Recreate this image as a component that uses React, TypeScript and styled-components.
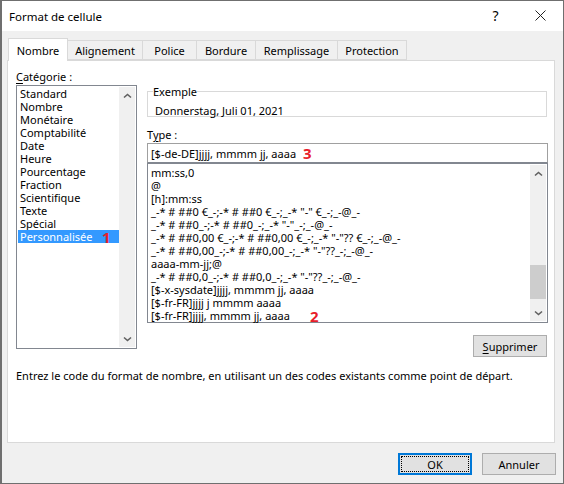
import React from 'react';
import styled, { createGlobalStyle } from 'styled-components';

const GlobalStyle = createGlobalStyle`
  html, body {
    margin: 0;
    padding: 0;
    background: #f0f0f0;
  }
  body {
    font-family: "Noto Sans", "Open Sans", sans-serif;
    font-size: 11px;
    color: #000;
  }
`;

const Dialog = styled.div`
  width: 564px;
  height: 484px;
  box-sizing: border-box;
  border: 1px solid #6f6f6f;
  border-left-width: 2px;
  background: #f0f0f0;
  display: flex;
  flex-direction: column;
  overflow: hidden;
`;

const TitleBar = styled.div`
  height: 30px;
  flex: none;
  background: #fff;
  display: flex;
  align-items: center;
  padding-left: 7px;
  font-size: 11.5px;
`;

const Title = styled.div`
  flex: 1;
`;

const TitleButton = styled.div`
  width: 45px;
  height: 30px;
  margin-top: -2px;
  display: flex;
  align-items: center;
  justify-content: center;
  font-size: 14px;
`;

const Body = styled.div`
  flex: 1;
  display: flex;
  flex-direction: column;
  padding: 7px 7px 0 5px;
`;

const TabStrip = styled.div`
  height: 22px;
  display: flex;
  align-items: flex-end;
  padding-left: 1px;
  position: relative;
  z-index: 1;
`;

const Tab = styled.div<{ $active?: boolean; $width: number }>`
  width: ${p => p.$width}px;
  height: ${p => (p.$active ? 23 : 20)}px;
  margin-bottom: ${p => (p.$active ? -1 : 0)}px;
  box-sizing: border-box;
  display: flex;
  align-items: center;
  justify-content: center;
  background: ${p => (p.$active ? '#fff' : '#f0f0f0')};
  border: 1px solid #d9d9d9;
  border-bottom: ${p => (p.$active ? 'none' : '1px solid #d9d9d9')};
  border-left: ${p => (p.$active ? '1px solid #d9d9d9' : 'none')};
`;

const Panel = styled.div`
  width: 548px;
  height: 383px;
  box-sizing: border-box;
  background: #fff;
  border: 1px solid #d9d9d9;
  padding: 9px 7px 0 8px;
`;

const Columns = styled.div`
  display: flex;
  gap: 10px;
`;

const LeftColumn = styled.div`
  width: 121px;
  flex: none;
`;

const RightColumn = styled.div`
  width: 401px;
  flex: none;
`;

const FieldLabel = styled.div`
  height: 15px;
  line-height: 13px;
  span {
    text-decoration: underline;
    text-underline-offset: 2px;
  }
`;

const ListFrame = styled.div<{ $height: number }>`
  height: ${p => p.$height}px;
  box-sizing: border-box;
  border: 1px solid #828790;
  background: #fff;
  display: flex;
  padding: 1px;
`;

const Rows = styled.div<{ $pad?: number }>`
  flex: 1;
  min-width: 0;
  padding-top: ${p => p.$pad ?? 0}px;
`;

const Row = styled.div<{ $selected?: boolean }>`
  position: relative;
  height: 13px;
  line-height: 13px;
  padding-left: 2px;
  white-space: nowrap;
  background: ${p => (p.$selected ? '#3399ff' : 'transparent')};
  color: ${p => (p.$selected ? '#fff' : '#000')};
`;

const Mark = styled.span<{ $left: number }>`
  position: absolute;
  left: ${p => p.$left}px;
  top: 50%;
  transform: translateY(-50%);
  font-family: "Open Sans", sans-serif;
  font-size: 15px;
  font-weight: 700;
  line-height: 15px;
  color: #e8202a;
`;

const ScrollBar = styled.div`
  width: 16px;
  flex: none;
  background: #f0f0f0;
  display: flex;
  flex-direction: column;
`;

const ScrollButton = styled.div`
  height: 17px;
  flex: none;
  display: flex;
  align-items: center;
  justify-content: center;
`;

const ScrollTrack = styled.div`
  flex: 1;
  display: flex;
  flex-direction: column;
  justify-content: flex-end;
  padding-bottom: 5px;
`;

const ScrollThumb = styled.div`
  height: 34px;
  background: #cdcdcd;
`;

const ExampleBox = styled.fieldset`
  margin: 15px 1px 11px 0;
  padding: 0 0 0 7px;
  height: 32px;
  box-sizing: border-box;
  border: 1px solid #d9d9d9;
  line-height: 13px;
`;

const ExampleLegend = styled.legend`
  margin-left: -2px;
  padding: 0;
  height: 13px;
  line-height: 14px;
`;

const ExampleValue = styled.div`
  padding-top: 6px;
`;

const TypeInput = styled.div`
  height: 20px;
  box-sizing: border-box;
  border: 1px solid #a0a0a0;
  border-bottom-color: #828790;
  line-height: 20px;
  padding-left: 3px;
  position: relative;
`;

const ButtonRow = styled.div`
  display: flex;
  justify-content: flex-end;
  margin-top: 12px;
  padding-right: 1px;
`;

const Button = styled.div<{ $default?: boolean }>`
  width: 74px;
  height: 22px;
  box-sizing: border-box;
  background: #e1e1e1;
  border: ${p => (p.$default ? '2px solid #0078d7' : '1px solid #adadad')};
  display: flex;
  align-items: center;
  justify-content: center;
  position: relative;
  span {
    text-decoration: underline;
    text-underline-offset: 2px;
  }
`;

const FocusRing = styled.div`
  position: absolute;
  inset: 1px;
  border: 1px dotted #000;
`;

const Description = styled.div`
  margin-top: 12px;
  line-height: 14px;
`;

const Footer = styled.div`
  flex: 1;
  display: flex;
  justify-content: flex-end;
  gap: 10px;
  padding-top: 10px;
`;

const Chevron: React.FC<{ down?: boolean }> = ({ down }) => (
  <svg width="9" height="6" viewBox="0 0 9 6">
    <path
      d={down ? 'M1 1.5 L4.5 4.5 L8 1.5' : 'M1 4.5 L4.5 1.5 L8 4.5'}
      fill="none"
      stroke="#606060"
      strokeWidth="1.6"
    />
  </svg>
);

const tabs = [
  { label: 'Nombre', width: 60 },
  { label: 'Alignement', width: 75 },
  { label: 'Police', width: 54 },
  { label: 'Bordure', width: 59 },
  { label: 'Remplissage', width: 82 },
  { label: 'Protection', width: 69 },
];

const categories = [
  'Standard',
  'Nombre',
  'Monétaire',
  'Comptabilité',
  'Date',
  'Heure',
  'Pourcentage',
  'Fraction',
  'Scientifique',
  'Texte',
  'Spécial',
  'Personnalisée',
];

const formats = [
  'mm:ss,0',
  '@',
  '[h]:mm:ss',
  '_-* # ##0 €_-;-* # ##0 €_-;_-* "-" €_-;_-@_-',
  '_-* # ##0_-;-* # ##0_-;_-* "-"_-;_-@_-',
  '_-* # ##0,00 €_-;-* # ##0,00 €_-;_-* "-"?? €_-;_-@_-',
  '_-* # ##0,00_-;-* # ##0,00_-;_-* "-"??_-;_-@_-',
  'aaaa-mm-jj;@',
  '_-* # ##0,0_-;-* # ##0,0_-;_-* "-"??_-;_-@_-',
  '[$-x-sysdate]jjjj, mmmm jj, aaaa',
  '[$-fr-FR]jjjj j mmmm aaaa',
  '[$-fr-FR]jjjj, mmmm jj, aaaa',
];

const App: React.FC = () => (
  <>
    <GlobalStyle />
    <Dialog>
      <TitleBar>
        <Title>Format de cellule</Title>
        <TitleButton>?</TitleButton>
        <TitleButton>
          <svg width="11" height="11" viewBox="0 0 11 11">
            <path d="M0.5 0.5 L10.5 10.5 M10.5 0.5 L0.5 10.5" stroke="#222" strokeWidth="1" fill="none" />
          </svg>
        </TitleButton>
      </TitleBar>
      <Body>
        <TabStrip>
          {tabs.map((tab, i) => (
            <Tab key={tab.label} $active={i === 0} $width={tab.width}>
              {tab.label}
            </Tab>
          ))}
        </TabStrip>
        <Panel>
          <Columns>
            <LeftColumn>
              <FieldLabel>
                <span>C</span>atégorie :
              </FieldLabel>
              <ListFrame $height={264}>
                <Rows>
                  {categories.map((name, i) => (
                    <Row key={name} $selected={i === categories.length - 1}>
                      {name}
                      {i === categories.length - 1 && <Mark $left={84}>1</Mark>}
                    </Row>
                  ))}
                </Rows>
                <ScrollBar>
                  <ScrollButton>
                    <Chevron />
                  </ScrollButton>
                  <ScrollTrack />
                  <ScrollButton>
                    <Chevron down />
                  </ScrollButton>
                </ScrollBar>
              </ListFrame>
            </LeftColumn>
            <RightColumn>
              <ExampleBox>
                <ExampleLegend>Exemple</ExampleLegend>
                <ExampleValue>Donnerstag, Juli 01, 2021</ExampleValue>
              </ExampleBox>
              <FieldLabel>
                T<span>y</span>pe :
              </FieldLabel>
              <TypeInput>
                [$-de-DE]jjjj, mmmm jj, aaaa
                <Mark $left={155}>3</Mark>
              </TypeInput>
              <ListFrame $height={160}>
                <Rows $pad={1}>
                  {formats.map((format, i) => (
                    <Row key={format}>
                      {format}
                      {i === formats.length - 1 && <Mark $left={161}>2</Mark>}
                    </Row>
                  ))}
                </Rows>
                <ScrollBar>
                  <ScrollButton>
                    <Chevron />
                  </ScrollButton>
                  <ScrollTrack>
                    <ScrollThumb />
                  </ScrollTrack>
                  <ScrollButton>
                    <Chevron down />
                  </ScrollButton>
                </ScrollBar>
              </ListFrame>
              <ButtonRow>
                <Button>
                  <div>
                    <span>S</span>upprimer
                  </div>
                </Button>
              </ButtonRow>
            </RightColumn>
          </Columns>
          <Description>
            Entrez le code du format de nombre, en utilisant un des codes existants comme point de départ.
          </Description>
        </Panel>
        <Footer>
          <Button $default>
            <FocusRing />
            OK
          </Button>
          <Button>Annuler</Button>
        </Footer>
      </Body>
    </Dialog>
  </>
);

export default App;
